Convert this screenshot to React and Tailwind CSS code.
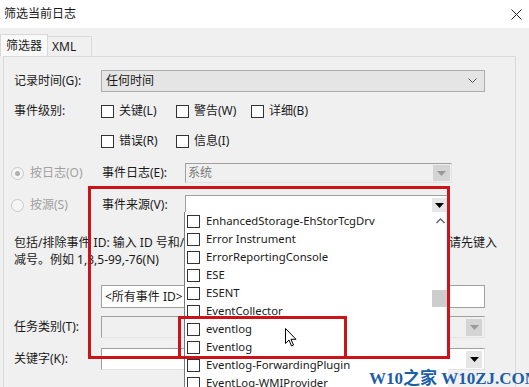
const Box = ({ disabled }) => (
  <span
    className={`inline-block w-[13px] h-[13px] border bg-white shrink-0 ${
      disabled ? "border-[#bcbcbc]" : "border-[#333]"
    }`}
  />
);

const Check = ({ label, className = "" }) => (
  <label className={`flex items-center gap-[5px] ${className}`}>
    <Box />
    <span>{label}</span>
  </label>
);

const Radio = ({ label, checked }) => (
  <div className="flex items-center gap-[6px] text-[#a0a0a0] w-[91px]">
    <span className="w-[13px] h-[13px] rounded-full border border-[#c8c8c8] bg-[#f5f5f5] flex items-center justify-center">
      {checked && <span className="w-[5px] h-[5px] rounded-full bg-[#b0b0b0]" />}
    </span>
    <span>{label}</span>
  </div>
);

const Tri = ({ color }) => (
  <svg width="9" height="5" viewBox="0 0 9 5">
    <path d="M0 0h9L4.5 5z" fill={color} />
  </svg>
);

const sources = [
  "EnhancedStorage-EhStorTcgDrv",
  "Error Instrument",
  "ErrorReportingConsole",
  "ESE",
  "ESENT",
  "EventCollector",
  "eventlog",
  "Eventlog",
  "Eventlog-ForwardingPlugin",
  "EventLog-WMIProvider",
];

export default function App() {
  return (
    <div
      className="relative w-[529px] h-[387px] overflow-hidden bg-[#f0f0f0] text-[12px] text-[#1a1a1a]"
      style={{ fontFamily: '"Noto Sans", "Noto Sans CJK SC", sans-serif' }}
    >
      {/* 标题栏 */}
      <div className="h-[28px] bg-white flex items-center justify-between pl-[4px] pr-[7px]">
        <span>筛选当前日志</span>
        <svg width="11" height="11" viewBox="0 0 11 11">
          <path d="M0.5 0.5l10 10M10.5 0.5l-10 10" stroke="#222" strokeWidth="1" />
        </svg>
      </div>

      {/* 选项卡 */}
      <div className="flex items-end h-[28px]">
        <div className="h-[22px] px-[5px] flex items-center bg-[#f9f9f9] border border-b-0 border-[#d9d9d9]">
          筛选器
        </div>
        <div className="h-[20px] w-[44px] px-[4px] flex items-center border border-l-0 border-b-0 border-[#d9d9d9]">
          XML
        </div>
      </div>

      {/* 面板 */}
      <div className="ml-[3px] w-[513px] h-[340px] border border-[#dadada] pt-[13px]">
        <div className="flex items-center h-[22px] pl-[10px]">
          <span className="w-[87px]">记录时间(G):</span>
          <div className="w-[384px] h-[22px] border border-[#adadad] bg-[#e5e5e5] flex items-center justify-between pl-[4px] pr-[7px]">
            <span>任何时间</span>
            <svg width="9" height="6" viewBox="0 0 9 6">
              <path d="M0.5 0.5l4 4 4-4" stroke="#555" fill="none" />
            </svg>
          </div>
        </div>

        <div className="flex items-center h-[22px] mt-[8px] pl-[10px]">
          <span className="w-[87px]">事件级别:</span>
          <Check label="关键(L)" className="w-[75px]" />
          <Check label="警告(W)" className="w-[75px]" />
          <Check label="详细(B)" />
        </div>

        <div className="flex items-center h-[22px] mt-[8px] pl-[97px]">
          <Check label="错误(R)" className="w-[75px]" />
          <Check label="信息(I)" />
        </div>

        <div className="flex items-center h-[20px] mt-[11px] pl-[7px]">
          <Radio label="按日志(O)" checked />
          <span className="w-[83px]">事件日志(E):</span>
          <div className="w-[267px] h-[20px] border border-[#a0a0a0] border-b-[#e3e3e3] border-r-[#e3e3e3] bg-[#f0f0f0] flex items-center justify-between pl-[2px] pr-[1px]">
            <span className="text-[#7a7a7a]">系统</span>
            <span className="w-[17px] h-[16px] bg-[#d4d4d4] flex items-center justify-center">
              <Tri color="#9a9a9a" />
            </span>
          </div>
        </div>

        <div className="flex items-center h-[20px] mt-[12px] pl-[7px]">
          <Radio label="按源(S)" />
          <span className="w-[83px]">事件来源(V):</span>
          <div className="w-[264px] h-[20px] border border-[#a0a0a0] border-b-0 bg-white flex items-center justify-end pr-[1px]">
            <span className="w-[15px] h-[16px] bg-[#e6e6e6] flex items-center justify-center">
              <Tri color="#000" />
            </span>
          </div>
        </div>

        <div className="mt-[19px] pl-[10px] w-[493px] leading-[17px]">
          <div className="flex justify-between">
            <span className="w-[170px] whitespace-nowrap overflow-hidden">
              包括/排除事件 ID: 输入 ID 号和/或 ID 范围
            </span>
            <span className="shrink-0">请先键入</span>
          </div>
          <div>减号。例如 1,3,5-99,-76(N)</div>
        </div>

        <div className="mt-[17px] pl-[97px]">
          <div className="w-[384px] h-[23px] border border-[#a0a0a0] bg-white flex items-center pl-[3px]">
            &lt;所有事件 ID&gt;
          </div>
        </div>

        <div className="flex items-center h-[22px] mt-[8px] pl-[10px]">
          <span className="w-[87px]">任务类别(T):</span>
          <div className="w-[384px] h-[22px] border border-[#a0a0a0] border-b-[#e3e3e3] border-r-[#e3e3e3] bg-[#f0f0f0] flex items-center justify-end pr-[2px]">
            <span className="w-[16px] h-[17px] bg-[#d4d4d4] flex items-center justify-center">
              <Tri color="#9a9a9a" />
            </span>
          </div>
        </div>

        <div className="flex items-center h-[22px] mt-[10px] pl-[10px]">
          <span className="w-[87px]">关键字(K):</span>
          <div className="w-[384px] h-[22px] border border-[#a0a0a0] border-b-[#e3e3e3] border-r-[#e3e3e3] bg-white flex items-center justify-end pr-[2px]">
            <span className="w-[16px] h-[17px] bg-[#e6e6e6] flex items-center justify-center">
              <Tri color="#000" />
            </span>
          </div>
        </div>
      </div>

      {/* 下拉列表 */}
      <div className="absolute left-[184px] top-[212px] w-[264px] h-[180px] bg-white border-l border-[#7a7a7a] flex text-[11.3px]">
        <div className="flex-1">
          {sources.map((s) => (
            <div key={s} className="h-[18px] flex items-center gap-[6px] pl-[2px]">
              <Box />
              <span>{s}</span>
            </div>
          ))}
        </div>
        <div className="w-[16px] flex flex-col items-center pt-[6px]">
          <svg width="9" height="6" viewBox="0 0 9 6">
            <path d="M0.5 5l4-4 4 4" stroke="#606060" strokeWidth="1.3" fill="none" />
          </svg>
          <div className="mt-[66px] w-[16px] h-[17px] bg-[#cdcdcd]" />
        </div>
      </div>

      {/* 红框标注 */}
      <div className="absolute left-[88px] top-[186px] w-[362px] h-[173px] border-[3px] border-[#cc1319]" />
      <div className="absolute left-[178px] top-[316px] w-[169px] h-[43px] border-[3px] border-[#cc1319]" />

      {/* 鼠标指针 */}
      <svg className="absolute left-[285px] top-[328px]" width="12" height="20" viewBox="0 0 12 20">
        <path d="M0.5 0.5v15l3.5-3.5 2.5 6 2-1-2.5-5.7h5z" fill="#fff" stroke="#000" strokeWidth="1" />
      </svg>

      {/* 水印 */}
      <div
        className="absolute left-[369px] top-[366px] text-[17px] font-bold text-[#1d5ea9] whitespace-nowrap"
        style={{ fontFamily: '"Liberation Serif", "Noto Sans CJK SC", serif' }}
      >
        W10之家 W10ZJ.COM
      </div>
    </div>
  );
}
